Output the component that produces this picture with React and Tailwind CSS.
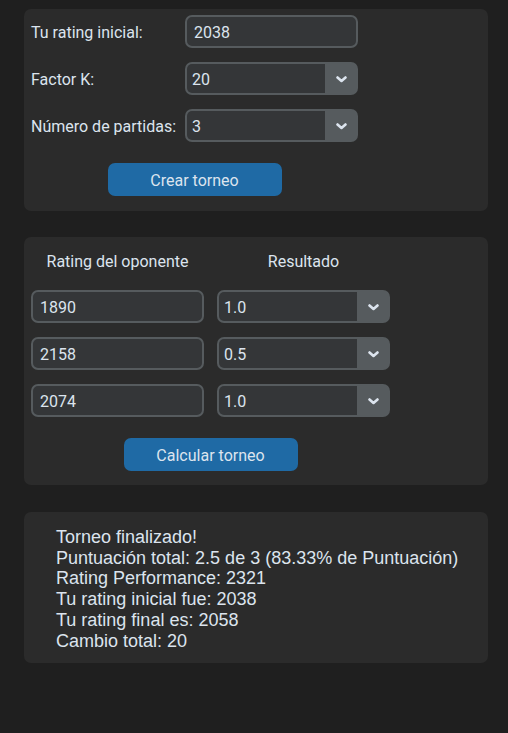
import React from "react";

const roboto = { fontFamily: "Roboto, 'Liberation Sans', sans-serif" };

function Chevron() {
  return (
    <svg width="11" height="7" viewBox="0 0 11 7" className="block">
      <polyline points="1.5,1.5 5.5,5 9.5,1.5" fill="none" stroke="#dce4ee" strokeWidth="2.6" strokeLinecap="round" strokeLinejoin="round" />
    </svg>
  );
}

function Entry({ value }) {
  return (
    <div className="w-[173px] h-[33px] rounded-[7px] border-2 border-[#565b5e] bg-[#343638] flex items-center pl-[7px] pt-[2px] text-[16px] text-[#dce4ee]" style={roboto}>
      {value}
    </div>
  );
}

function Combo({ value }) {
  return (
    <div className="w-[173px] h-[33px] rounded-[7px] bg-[#565b5e] flex overflow-hidden text-[16px] text-[#dce4ee]" style={roboto}>
      <div className="flex-1 my-[2px] ml-[2px] rounded-l-[5px] bg-[#343638] flex items-center pl-[5px] pt-[2px]">{value}</div>
      <div className="w-[33px] flex items-center justify-center pt-[1px]">
        <Chevron />
      </div>
    </div>
  );
}

function Button({ children }) {
  return (
    <div className="w-[174px] h-[33px] rounded-[7px] bg-[#1f6aa5] flex items-center justify-center pt-[2px] text-[16px] text-[#dce4ee]" style={roboto}>
      {children}
    </div>
  );
}

function Label({ children }) {
  return (
    <div className="w-[154px] pt-[3px] text-[16px] text-[#dce4ee]" style={roboto}>{children}</div>
  );
}

export default function App() {
  return (
    <div className="min-h-[733px] w-[508px] bg-[#1f1f1f] pt-[9px]">
      {/* Panel 1 */}
      <div className="ml-[24px] w-[464px] h-[202px] rounded-[7px] bg-[#2b2b2b] pt-[6px] pl-[7px]">
        <div className="w-[327px] flex flex-col">
          <div className="flex flex-col gap-[14px]">
            <div className="flex items-center">
              <Label>Tu rating inicial:</Label>
              <Entry value="2038" />
            </div>
            <div className="flex items-center">
              <Label>Factor K:</Label>
              <Combo value="20" />
            </div>
            <div className="flex items-center">
              <Label>Número de partidas:</Label>
              <Combo value="3" />
            </div>
          </div>
          <div className="flex justify-center mt-[21px]">
            <Button>Crear torneo</Button>
          </div>
        </div>
      </div>

      {/* Panel 2 */}
      <div className="ml-[24px] mt-[26px] w-[464px] h-[248px] rounded-[7px] bg-[#2b2b2b] pl-[7px] pt-[12px]">
        <div className="w-[359px] flex flex-col">
          <div className="flex gap-[13px] h-[22px] items-center pt-[4px]">
            <div className="w-[173px] text-center text-[16px] text-[#dce4ee]" style={roboto}>Rating del oponente</div>
            <div className="w-[173px] text-center text-[16px] text-[#dce4ee]" style={roboto}>Resultado</div>
          </div>
          <div className="flex flex-col gap-[14px] mt-[19px]">
            <div className="flex gap-[13px]">
              <Entry value="1890" />
              <Combo value="1.0" />
            </div>
            <div className="flex gap-[13px]">
              <Entry value="2158" />
              <Combo value="0.5" />
            </div>
            <div className="flex gap-[13px]">
              <Entry value="2074" />
              <Combo value="1.0" />
            </div>
          </div>
          <div className="flex justify-center mt-[21px]">
            <Button>Calcular torneo</Button>
          </div>
        </div>
      </div>

      {/* Panel 3 */}
      <div
        className="ml-[24px] mt-[27px] w-[464px] h-[151px] rounded-[7px] bg-[#2b2b2b] pl-[32px] pt-[15px] text-[18px] text-[#dce4ee] leading-[20.7px]"
        style={{ fontFamily: "'Liberation Sans', Arial, sans-serif" }}
      >
        <div>Torneo finalizado!</div>
        <div>Puntuación total: 2.5 de 3 (83.33% de Puntuación)</div>
        <div>Rating Performance: 2321</div>
        <div>Tu rating inicial fue: 2038</div>
        <div>Tu rating final es: 2058</div>
        <div>Cambio total: 20</div>
      </div>
    </div>
  );
}
